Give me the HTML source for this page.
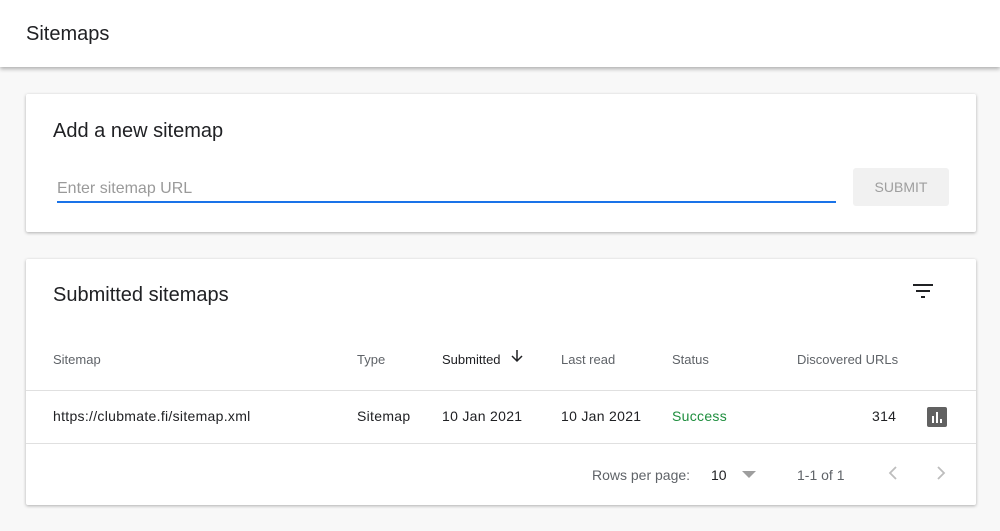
<!DOCTYPE html>
<html><head><style>
*{margin:0;padding:0;box-sizing:border-box}
body{width:1000px;height:531px;background:#f8f8f8;font-family:"Liberation Sans",sans-serif;position:relative;overflow:hidden;color:#202124}
.a{position:absolute;white-space:nowrap}
.hdr{position:absolute;left:0;top:0;width:1000px;height:67px;background:#fff;box-shadow:0 2px 4px rgba(0,0,0,.3)}
.card{position:absolute;left:26px;width:950px;background:#fff;border-radius:2px;box-shadow:0 1px 3px rgba(0,0,0,.3)}
.th{font-size:13px;color:#5f6368;top:352px}
.td{font-size:14px;color:#202124;top:408px;letter-spacing:.3px}
</style></head><body>
<div class="hdr"></div>
<div class="a" style="left:26px;top:23px;font-size:20px">Sitemaps</div>
<div class="card" style="top:94px;height:138px"></div>
<div class="a" style="left:53px;top:120px;font-size:20px">Add a new sitemap</div>
<div class="a" style="left:57px;top:180px;font-size:16px;color:#9a9a9a">Enter sitemap URL</div>
<div class="a" style="left:57px;top:201px;width:779px;height:2px;background:#1a73e8"></div>
<div class="a" style="left:853px;top:168px;width:96px;height:38px;background:#f1f1f1;border-radius:3px;font-size:14px;color:#9e9e9e;text-align:center;line-height:38px">SUBMIT</div>
<div class="card" style="top:259px;height:246px"></div>
<div class="a" style="left:53px;top:284px;font-size:20px">Submitted sitemaps</div>
<svg class="a" style="left:912px;top:283px" width="22" height="16"><path d="M1 2h20M4 8h14M9 14h4" stroke="#202124" stroke-width="2"/></svg>
<div class="a th" style="left:53px">Sitemap</div>
<div class="a th" style="left:357px">Type</div>
<div class="a th" style="left:442px;color:#202124">Submitted</div>
<svg class="a" style="left:510px;top:349px" width="14" height="14"><path d="M7 1v11M2 7l5 5 5-5" stroke="#202124" stroke-width="1.5" fill="none"/></svg>
<div class="a th" style="left:561px">Last read</div>
<div class="a th" style="left:672px">Status</div>
<div class="a th" style="left:797px">Discovered URLs</div>
<div class="a" style="left:26px;top:390px;width:950px;height:1px;background:#e0e0e0"></div>
<div class="a td" style="left:53px">https://clubmate.fi/sitemap.xml</div>
<div class="a td" style="left:357px">Sitemap</div>
<div class="a td" style="left:442px">10 Jan 2021</div>
<div class="a td" style="left:561px">10 Jan 2021</div>
<div class="a td" style="left:672px;color:#1e8e3e">Success</div>
<div class="a td" style="left:872px">314</div>
<svg class="a" style="left:927px;top:407px" width="20" height="20"><rect width="20" height="20" rx="2" fill="#616161"/><path d="M6 9v7M10 5v11M14 12v4" stroke="#fff" stroke-width="2"/></svg>
<div class="a" style="left:26px;top:443px;width:950px;height:1px;background:#e0e0e0"></div>
<div class="a" style="left:592px;top:467px;font-size:14px;color:#5f6368">Rows per page:</div>
<div class="a" style="left:711px;top:467px;font-size:14px;color:#202124">10</div>
<svg class="a" style="left:742px;top:471px" width="14" height="8"><path d="M0 0h14L7 7z" fill="#9e9e9e"/></svg>
<div class="a" style="left:797px;top:467px;font-size:14px;color:#5f6368">1-1 of 1</div>
<svg class="a" style="left:886px;top:465px" width="14" height="16"><path d="M10 2L4 8l6 6" stroke="#bdbdbd" stroke-width="1.8" fill="none"/></svg>
<svg class="a" style="left:934px;top:465px" width="14" height="16"><path d="M4 2l6 6-6 6" stroke="#bdbdbd" stroke-width="1.8" fill="none"/></svg>
</body></html>
